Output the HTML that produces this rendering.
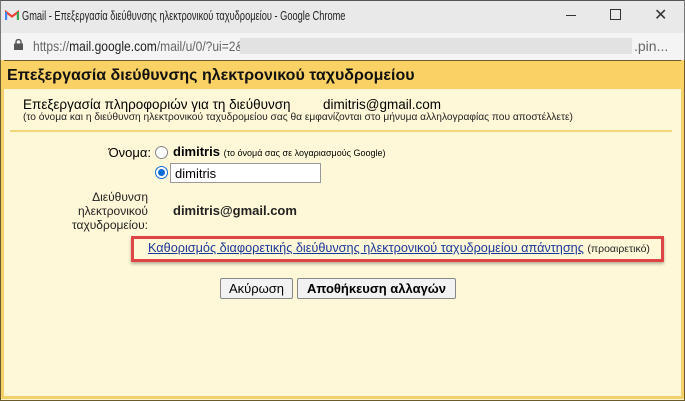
<!DOCTYPE html>
<html><head><meta charset="utf-8"><style>
*{margin:0;padding:0;box-sizing:border-box}
body{width:685px;height:401px;overflow:hidden;font-family:"Liberation Sans",Arial,sans-serif;background:#fff8d8;position:relative;color:#000}
.a{position:absolute;white-space:nowrap}
</style></head><body>
<div class="a" style="left:0;top:0;width:685px;height:33px;background:#e9e9e9;border-top:1px solid #555;border-left:1px solid #777;border-right:1px solid #777"></div>
<svg class="a" style="left:5px;top:10px" width="14" height="11" viewBox="0 0 14 11"><path d="M1 10V2l6 4.5L13 2v8" fill="none" stroke="#ea4335" stroke-width="2.2"/><path d="M1 10V2" stroke="#4285f4" stroke-width="2.2"/><path d="M13 10V2" stroke="#34a853" stroke-width="2.2"/></svg>
<div class="a" style="left:22px;top:9px;font-size:12.5px;color:#222;transform:scaleX(0.74);transform-origin:0 0">Gmail - Επεξεργασία διεύθυνσης ηλεκτρονικού ταχυδρομείου - Google Chrome</div>
<div class="a" style="left:566px;top:15px;width:10px;height:1px;background:#333"></div>
<div class="a" style="left:610px;top:9px;width:11px;height:11px;border:1px solid #333"></div>
<div class="a" style="left:654px;top:5px;font-size:16px;color:#333">✕</div>
<div class="a" style="left:0;top:33px;width:685px;height:27px;background:#f4f4f4;border-left:1px solid #777;border-right:1px solid #777"></div>
<svg class="a" style="left:14px;top:39px" width="9" height="11" viewBox="0 0 9 11"><rect x="0" y="4.5" width="9" height="6.5" fill="#555"/><path d="M2 5V3a2.5 2.5 0 0 1 5 0v2" fill="none" stroke="#555" stroke-width="1.4"/></svg>
<div class="a" style="left:33px;top:38px;font-size:14px;color:#666;transform:scaleX(0.86);transform-origin:0 0">https://<span style="color:#222">mail.google.com</span>/mail/u/0/?ui=2&amp;ik=</div>
<div class="a" style="left:240px;top:38px;width:392px;height:16px;background:#e2e2e2"></div>
<div class="a" style="left:634px;top:38px;font-size:14px;color:#666">.pin...</div>
<div class="a" style="left:0;top:60px;width:685px;height:341px;border:1px solid #6b5a2a"></div>
<div class="a" style="left:1px;top:60px;width:683px;height:339px;border:3px solid #f5d06a;border-top:none"></div>
<div class="a" style="left:1px;top:61px;width:683px;height:28px;background:#fad165"></div>
<div class="a" style="left:7px;top:67px;font-size:16px;font-weight:bold;color:#111">Επεξεργασία διεύθυνσης ηλεκτρονικού ταχυδρομείου</div>
<div class="a" style="left:23px;top:97px;font-size:13.5px">Επεξεργασία πληροφοριών για τη διεύθυνση</div>
<div class="a" style="left:323px;top:97px;font-size:13.5px">dimitris@gmail.com</div>
<div class="a" style="left:23px;top:112px;font-size:10px;color:#222;transform:scaleX(1.02);transform-origin:0 0">(το όνομα και η διεύθυνση ηλεκτρονικού ταχυδρομείου σας θα εμφανίζονται στο μήνυμα αλληλογραφίας που αποστέλλετε)</div>
<div class="a" style="left:10px;top:130px;width:662px;height:2px;background:#f5d77a"></div>
<div class="a" style="left:90px;top:145px;width:61px;text-align:right;font-size:13px">Όνομα:</div>
<div class="a" style="left:155px;top:146px;width:13px;height:13px;border-radius:50%;border:1px solid #888;background:#fff"></div>
<div class="a" style="left:173px;top:144px;font-size:13px"><b>dimitris</b> <span style="font-size:9px">(το όνομά σας σε λογαριασμούς Google)</span></div>
<div class="a" style="left:155px;top:166px;width:13px;height:13px;border-radius:50%;border:1px solid #0a6cd6;background:#fff"><div style="margin:2px;width:7px;height:7px;border-radius:50%;background:#0a6cd6"></div></div>
<div class="a" style="left:170px;top:163px;width:151px;height:20px;border:1px solid #999;background:#fff;font-size:13px;padding:2px 0 0 4px">dimitris</div>
<div class="a" style="left:40px;top:190px;width:108px;text-align:right;font-size:12px;line-height:14px;color:#222">Διεύθυνση<br>ηλεκτρονικού<br>ταχυδρομείου:</div>
<div class="a" style="left:173px;top:203px;font-size:13px;font-weight:bold;color:#222">dimitris@gmail.com</div>
<div class="a" style="left:131px;top:236px;width:533px;height:26px;border:3px solid #e04545;box-shadow:0 2px 3px rgba(0,0,0,.3)"></div>
<div class="a" style="left:148px;top:241px;font-size:12.7px;color:#1a3a9a"><span style="text-decoration:underline">Καθορισμός διαφορετικής διεύθυνσης ηλεκτρονικού ταχυδρομείου απάντησης</span> <span style="font-size:10.5px;color:#222">(προαιρετικό)</span></div>
<div class="a" style="left:220px;top:278px;width:73px;height:21px;border:1px solid #888;border-radius:2px;background:#f2f2f2;font-size:13px;text-align:center;line-height:19px">Ακύρωση</div>
<div class="a" style="left:297px;top:278px;width:159px;height:21px;border:1px solid #888;border-radius:2px;background:#f2f2f2;font-size:13px;font-weight:bold;text-align:center;line-height:19px">Αποθήκευση αλλαγών</div>
</body></html>
